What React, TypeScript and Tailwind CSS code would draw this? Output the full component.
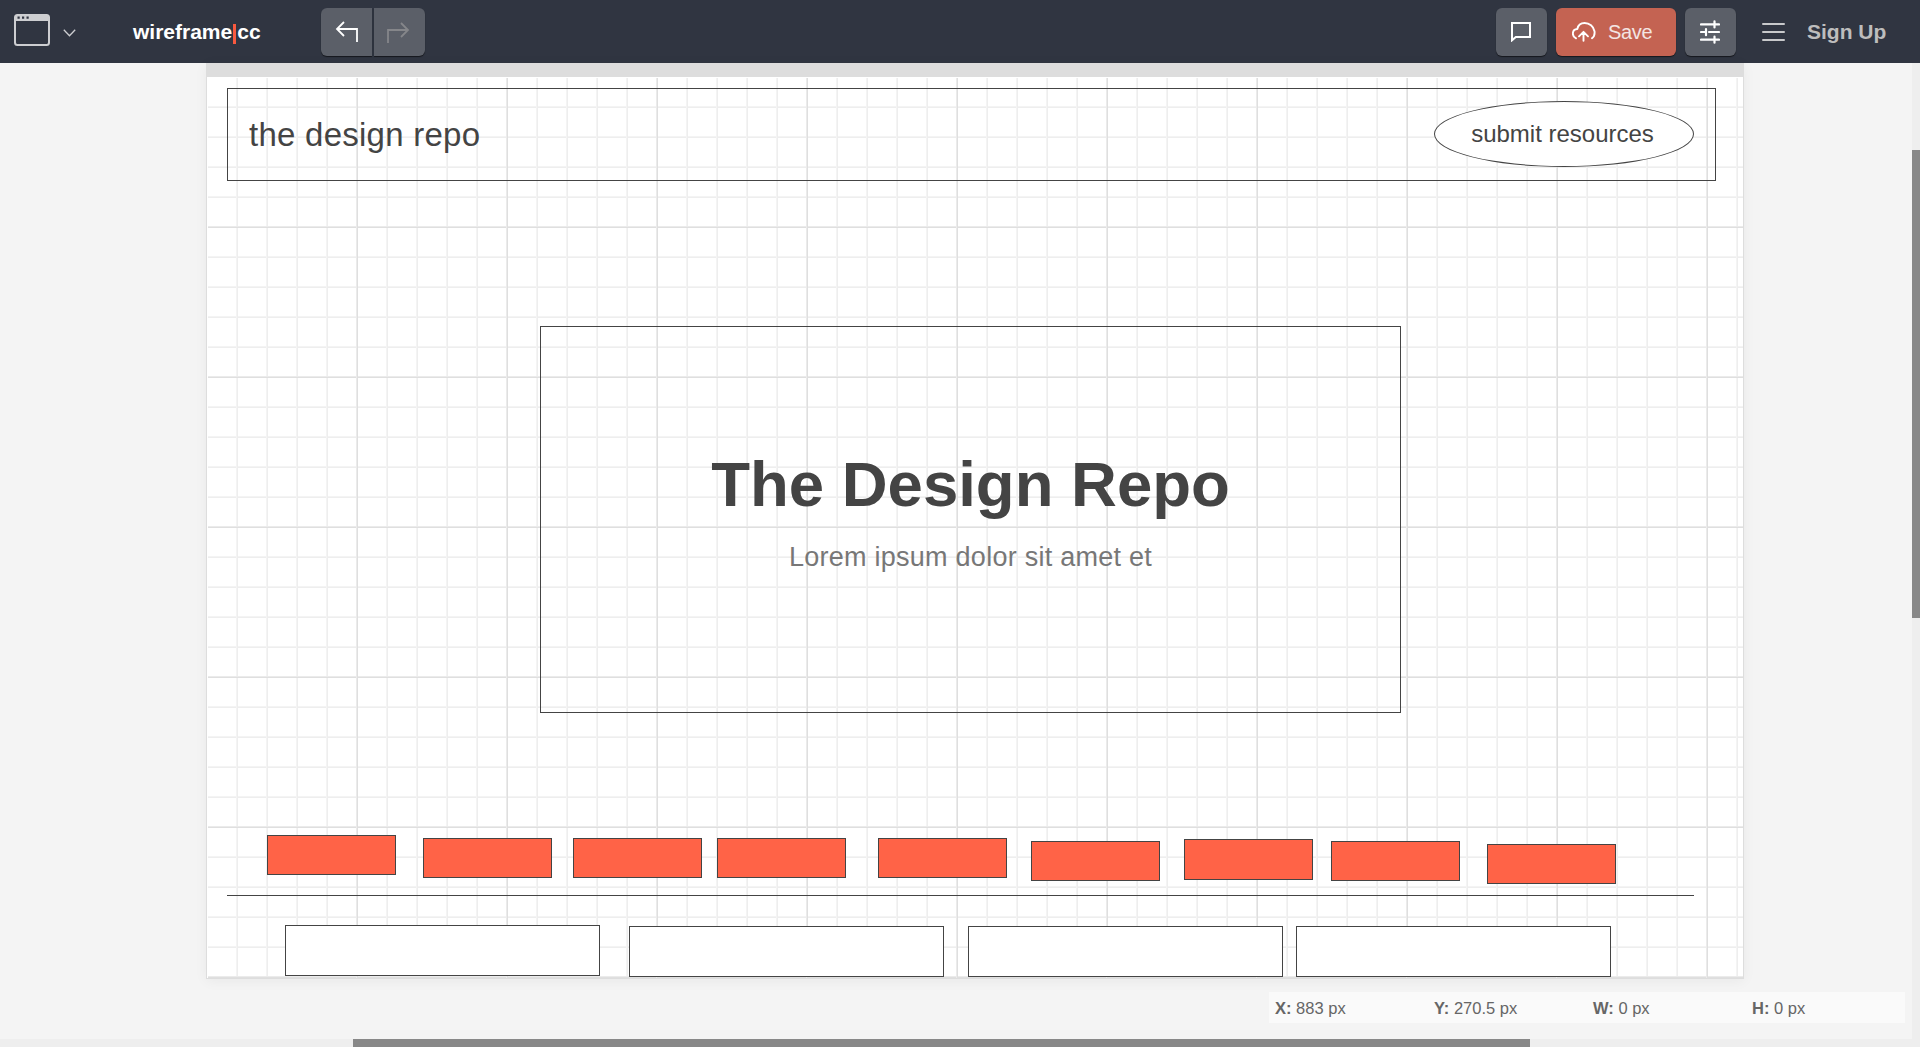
import React from "react";

function WindowIcon() {
  return (
    <svg width="36" height="32" viewBox="0 0 36 32" fill="none">
      <rect x="1" y="1" width="34" height="30" rx="2.5" stroke="#cdced1" strokeWidth="2" />
      <path d="M1 7V3.500A2.500 2.500 0 0 1 3.500 1h29A2.500 2.500 0 0 1 35 3.500V7z" fill="#cdced1" />
      <path d="M3.500 2.500h2.200v2.200H3.500zM8 2.500h2.200v2.200H8zM12.500 2.500h2.200v2.200h-2.200z" fill="#303541" />
    </svg>
  );
}

function ArrowIcon({ className }: { className: string }) {
  return (
    <svg width="24" height="22" viewBox="0 0 24 22" fill="none" stroke="currentColor" strokeWidth="1.8" className={className}>
      <path d="M9 1L2 8l7 7M2 8h20v13" />
    </svg>
  );
}

function CommentIcon() {
  return (
    <svg width="20" height="20" viewBox="0 0 20 20" fill="none" stroke="#fff" strokeWidth="2" className="mr-px">
      <path d="M1 1h18v14H4.800L1 18.300z" />
    </svg>
  );
}

function CloudIcon() {
  return (
    <svg width="24" height="20" viewBox="0 0 24 20" fill="none" stroke="#fff" strokeWidth="1.9" strokeLinecap="round" strokeLinejoin="round">
      <path d="M4 16.300C1.800 15.200.8 13.500.9 11.500.9 9 2.800 7.200 5.300 7 6 3.500 8.900 1 12.600 1c4.800 0 9 3.500 9.900 8.200.4 3-.6 5.800-2.500 7.100" />
      <path d="M11.500 18.800V10M7 14.300l4.500-4.500 4.500 4.500" />
    </svg>
  );
}

function SlidersIcon() {
  return (
    <svg width="20" height="24" viewBox="0 0 20 24" fill="none" stroke="#fff" strokeWidth="2.200" strokeLinecap="round" className="mr-px">
      <path d="M1 4.400h18M14.500 1.300v6.200M1 12h4M9 12h10M6 9v6.200M1 19.600h18M14.500 16.500v6.200" />
    </svg>
  );
}

function TopBar() {
  const tool = "flex h-12 w-[51px] items-center justify-center bg-[#5b5f68] shadow-[0_1px_1px_rgba(0,0,0,0.55)]";
  return (
    <header className="flex h-[63px] shrink-0 items-start bg-[#303541] pt-2">
      <div className="ml-3.5 mt-1.5"><WindowIcon /></div>
      <svg width="13" height="8" viewBox="0 0 13 8" fill="none" stroke="#cdced1" strokeWidth="1.3" className="ml-[13px] mt-[21px]">
        <path d="M.8.800l5.700 5.900L12.200.800" />
      </svg>
      <div className="ml-[57px] flex h-12 w-[188px] items-center text-[21px] font-bold text-white">
        <span>wireframe</span>
        <span className="mx-px mt-1 h-5 w-[3px] bg-[#f8593f]" />
        <span>cc</span>
      </div>
      <div className="flex gap-0.5">
        <button className={tool + " rounded-l-md"}><ArrowIcon className="text-white" /></button>
        <button className={tool + " rounded-r-md"}><ArrowIcon className="mr-[3px] mt-0.5 -scale-x-100 text-[#85868a]" /></button>
      </div>
      <div className="ml-auto flex">
        <button className={tool + " rounded-md"}><CommentIcon /></button>
        <button className="ml-[9px] flex h-12 w-[120px] items-center rounded-md bg-[#c46352] pl-4 text-xl text-[#f3e5e3] shadow-[0_1px_1px_rgba(0,0,0,0.55)]">
          <CloudIcon /><span className="ml-3 tracking-[-0.3px]">Save</span>
        </button>
        <button className={tool + " ml-[9px] rounded-md"}><SlidersIcon /></button>
        <div className="ml-[26px] mt-[15px] flex flex-col gap-1.5">
          <span className="h-0.5 w-[23px] rounded bg-[#c8c9cb]" />
          <span className="h-0.5 w-[23px] rounded bg-[#c8c9cb]" />
          <span className="h-0.5 w-[23px] rounded bg-[#c8c9cb]" />
        </div>
        <div className="ml-[22px] flex h-12 w-[113px] items-center whitespace-nowrap text-[21px] font-bold text-[#bdbdbd]">Sign Up</div>
      </div>
    </header>
  );
}

const tags = [
  "left-[59px] top-[757px] h-10",
  "left-[215px] top-[760px] h-10",
  "left-[365px] top-[760px] h-10",
  "left-[509px] top-[760px] h-10",
  "left-[670px] top-[760px] h-10",
  "left-[823px] top-[763px] h-10",
  "left-[976px] top-[761px] h-[41px]",
  "left-[1123px] top-[763px] h-10",
  "left-[1279px] top-[766px] h-10",
];

const cards = [
  "left-[77px] top-[847px]",
  "left-[421px] top-[848px]",
  "left-[760px] top-[848px]",
  "left-[1088px] top-[848px]",
];

const grid =
  "bg-[linear-gradient(to_right,transparent_148px,#ebebeb_148px,#ebebeb_149px,#dfdfdf_149px),linear-gradient(to_bottom,transparent_148px,#ebebeb_148px,#ebebeb_149px,#dfdfdf_149px),linear-gradient(to_right,transparent_28px,#f4f4f4_28px,#f4f4f4_29px,#eeeeee_29px),linear-gradient(to_bottom,transparent_28px,#f4f4f4_28px,#f4f4f4_29px,#eeeeee_29px)] bg-[size:150px_150px,150px_150px,30px_30px,30px_30px]";

function Canvas() {
  return (
    <section className="ml-[206px] flex h-[916px] w-[1538px] flex-col border border-t-0 border-[#dddddd] bg-white shadow-[0_2px_12px_rgba(0,0,0,0.05)]">
      <div className="-mx-px h-3.5 shrink-0 bg-[#dddddd]" />
      <div className={"relative ml-px mt-px h-[900px] text-[#444444] " + grid}>
        <div className="absolute left-[19px] top-[10px] flex h-[93px] w-[1489px] items-center border border-[#444444] pl-[21px] text-[33px] tracking-[0.25px]">
          the design repo
        </div>
        <div className="absolute left-[1226px] top-[23px] flex h-[66px] w-[260px] items-center justify-center rounded-[50%] border border-[#444444] bg-white pr-[3px] text-2xl">
          submit resources
        </div>
        <div className="absolute left-[332px] top-[248px] flex h-[387px] w-[861px] flex-col items-center border border-[#444444] pt-[119px]">
          <h1 className="text-[63.5px] font-bold leading-[76px]">The Design Repo</h1>
          <p className="mt-[19px] text-[27px] leading-8 tracking-[0.25px] text-[#777777]">Lorem ipsum dolor sit amet et</p>
        </div>
        {tags.map((place) => (
          <div key={place} className={"absolute w-[129px] border border-[#444444] bg-[#ff6347] " + place} />
        ))}
        <div className="absolute left-[19px] top-[817px] w-[1467px] border-t border-[#444444]" />
        {cards.map((place) => (
          <div key={place} className={"absolute h-[51px] w-[315px] border border-[#444444] bg-white " + place} />
        ))}
      </div>
    </section>
  );
}

const readings = [
  ["X:", "883 px"],
  ["Y:", "270.5 px"],
  ["W:", "0 px"],
  ["H:", "0 px"],
];

export default function App() {
  return (
    <div className="flex h-[1047px] w-[1920px] flex-col overflow-hidden bg-[#f4f4f4] font-['Liberation_Sans',Arial,sans-serif]">
      <TopBar />
      <div className="flex h-[976px]">
        <main className="w-[1912px]">
          <Canvas />
          <div className="ml-[1269px] mt-[13px] grid h-[31px] w-[636px] grid-cols-[repeat(4,159px)] items-center bg-[#fafafa] text-[16.5px] text-[#666666]">
            {readings.map(([name, value]) => (
              <span key={name} className="pl-1.5 pt-px"><b>{name}</b> {value}</span>
            ))}
          </div>
        </main>
        <div className="w-2 bg-[#eeeeee] pt-[87px]"><div className="h-[468px] bg-[#888888]" /></div>
      </div>
      <div className="h-2 bg-[#eeeeee] pl-[353px]"><div className="h-2 w-[1177px] bg-[#888888]" /></div>
    </div>
  );
}
